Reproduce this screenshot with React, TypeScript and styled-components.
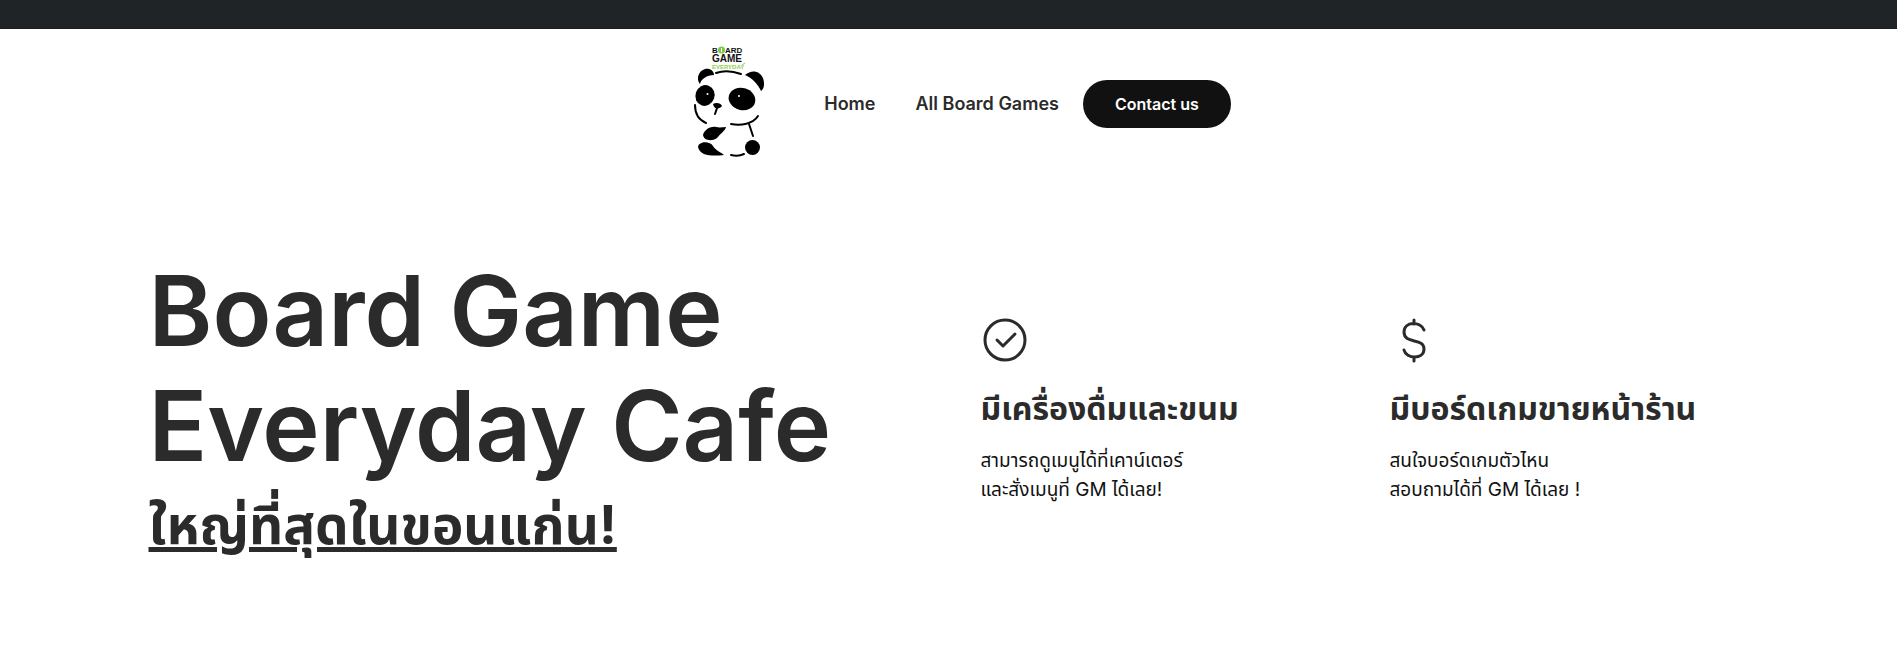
import React from "react";
import styled, { createGlobalStyle } from "styled-components";

const GlobalStyle = createGlobalStyle`
  * { box-sizing: border-box; }
  body {
    margin: 0;
    background: #fff;
    color: #2b2b2b;
    font-family: Inter, "Noto Sans Thai", "Open Sans", sans-serif;
  }
`;

const TopBar = styled.div`
  height: 29px;
  background: #1f2427;
  border-bottom: 1px solid #191d20;
`;

const Header = styled.header`
  display: flex;
  justify-content: center;
  align-items: center;
  padding: 15px 0 12px;
`;

const LogoLink = styled.a`
  display: block;
  height: 120px;
  margin: 0 56px 0 26px;
`;

const Nav = styled.nav`
  display: flex;
  align-items: center;
  gap: 24px;
`;

const Menu = styled.div`
  display: flex;
  gap: 40px;
`;

const NavLink = styled.a`
  color: #2b2b2b;
  font-size: 18px;
  font-weight: 600;
  line-height: 24px;
  text-decoration: none;
`;

const ContactButton = styled.button`
  height: 48px;
  padding: 0 32px;
  border: 0;
  border-radius: 24px;
  background: #111;
  color: #fff;
  font: 600 16px/24px Inter, sans-serif;
`;

const Hero = styled.main`
  display: grid;
  grid-template-columns: 1fr 1fr;
  align-items: center;
  max-width: 1600px;
  margin: 0 auto;
  padding: 77px 0;
`;

const Title = styled.h1`
  margin: 0;
  font-size: 97px;
  font-weight: 600;
  line-height: 115px;
`;

const Tagline = styled.span`
  display: block;
  font-size: 53px;
  font-weight: 700;
  line-height: 84px;
  text-decoration: underline;
`;

const Features = styled.section`
  display: grid;
  grid-template-columns: 1fr 1fr;
  gap: 50px;
  padding-left: 32px;
`;

const FeatureIcon = styled.svg`
  display: block;
  width: 48px;
  height: 48px;
  fill: none;
  stroke: #2b2b2b;
  stroke-width: 3;
  stroke-linecap: round;
  stroke-linejoin: round;
`;

const FeatureTitle = styled.h2`
  margin: 24px 0 16px;
  font-size: 32px;
  font-weight: 700;
  line-height: 42px;
  white-space: nowrap;
`;

const FeatureText = styled.p`
  margin: 0;
  font-size: 19px;
  line-height: 29px;
  color: #111;
`;

const Logo = () => (
  <svg width="76" height="120" viewBox="0 0 76 120" role="img" aria-label="Board Game Everyday">
    <g fontFamily="Liberation Sans" fontWeight="700" fill="#111">
      <text x="20" y="9" fontSize="8">B</text>
      <text x="33" y="9" fontSize="8">ARD</text>
      <text x="20" y="18" fontSize="10">GAME</text>
      <text x="20" y="25" fontSize="6" fill="#8bd14b">EVERYDAY</text>
    </g>
    <circle cx="29.500" cy="6" r="3.500" fill="#7ac943" />
    <path d="M29.500 4v4" stroke="#fff" />
    <path d="M50 21l3-2" stroke="#8bd14b" />
    <path d="M8 40C4 36 6 27 13 25 18 24 22 27 22 31 15 31 9 35 8 40ZM53 31C59 26 67 26 71 34 73 40 72 45 69 47 66 40 60 34 53 31Z" />
    <ellipse cx="13" cy="51.500" rx="9.500" ry="10.500" transform="rotate(20 13 51.500)" />
    <ellipse cx="50" cy="55" rx="13.500" ry="11" transform="rotate(15 50 55)" />
    <circle cx="15.500" cy="50" r="1" fill="#fff" />
    <circle cx="47" cy="52" r="1" fill="#fff" />
    <path d="M21 60C24 58 29 59 30 62 28 65 22 66 21 60Z" />
    <g fill="none" stroke="#000" strokeWidth="2" strokeLinecap="round">
      <path d="M24 29C32 26 41 27 49 30M25 64L23 70M3 61C3 70 7 76 14 79M39 80C49 82 61 80 66 72M57 80L61 92M39 111C43 112 48 112 52 110" />
    </g>
    <path d="M34 83C31 83 28 84 24 83 17 82 12 87 11 91 12 97 21 98 26 93 29 89 33 87 34 83ZM6 103C7 97 18 97 21 102 24 107 29 108 32 111 23 112 8 113 6 103Z" />
    <circle cx="60.500" cy="103.500" r="7.500" />
  </svg>
);

const features = [
  {
    icon: <><circle cx="24" cy="24" r="20" /><path d="M16 24l6 6 12-12" /></>,
    title: "มีเครื่องดื่มและขนม",
    lines: ["สามารถดูเมนูได้ที่เคาน์เตอร์", "และสั่งเมนูที่ GM ได้เลย!"],
  },
  {
    icon: <path d="M24 4v4M24 41v4M34 14C31 5 14 5 14 16C14 29 34 21 34 33C34 44 16 43 14 34" />,
    title: "มีบอร์ดเกมขายหน้าร้าน",
    lines: ["สนใจบอร์ดเกมตัวไหน", "สอบถามได้ที่ GM ได้เลย !"],
  },
];

export default function App() {
  return (
    <>
      <GlobalStyle />
      <TopBar />
      <Header>
        <LogoLink href="#"><Logo /></LogoLink>
        <Nav>
          <Menu>
            <NavLink href="#">Home</NavLink>
            <NavLink href="#games">All Board Games</NavLink>
          </Menu>
          <ContactButton type="button">Contact us</ContactButton>
        </Nav>
      </Header>
      <Hero>
        <Title>
          Board Game<br />Everyday Cafe
          <Tagline>ใหญ่ที่สุดในขอนแก่น!</Tagline>
        </Title>
        <Features>
          {features.map((f) => (
            <article key={f.title}>
              <FeatureIcon viewBox="0 0 48 48" aria-hidden="true">{f.icon}</FeatureIcon>
              <FeatureTitle>{f.title}</FeatureTitle>
              <FeatureText>{f.lines[0]}<br />{f.lines[1]}</FeatureText>
            </article>
          ))}
        </Features>
      </Hero>
    </>
  );
}
